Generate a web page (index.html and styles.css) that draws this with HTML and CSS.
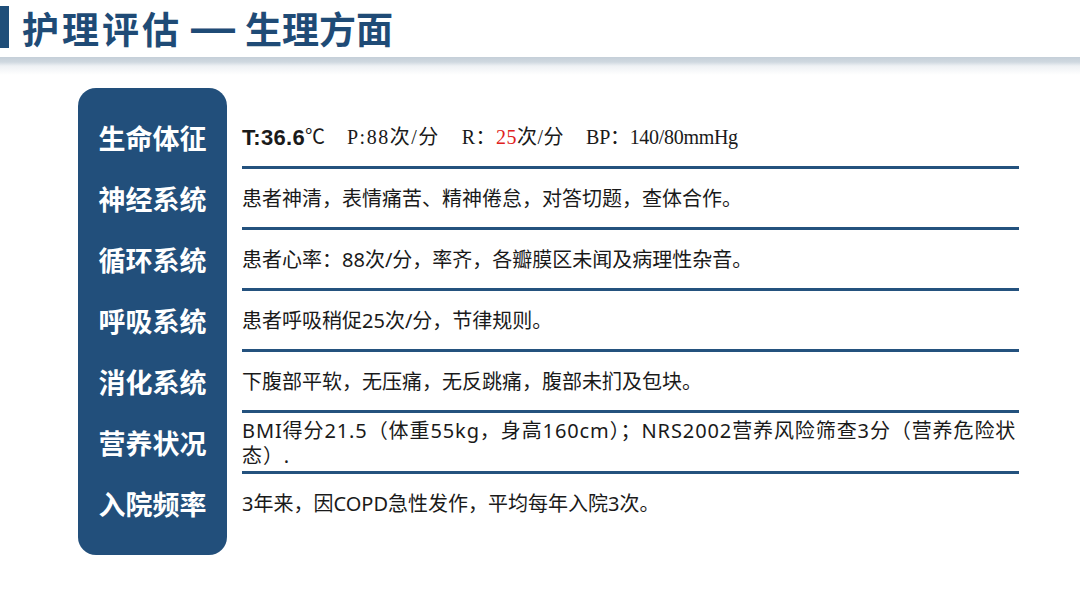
FILE: index.html
```html
<!DOCTYPE html>
<html lang="zh">
<head>
<meta charset="utf-8">
<link rel="stylesheet" href="styles.css">
</head>
<body>
<header class="header">
  <div class="accent"></div>
  <h1 class="title"><span class="t1">护理评估</span><span class="dash">—</span><span class="t2">生理方面</span></h1>
</header>
<div class="shadow"></div>
<main class="main">
  <div class="panel">
    <div class="label">生命体征</div>
    <div class="label">神经系统</div>
    <div class="label">循环系统</div>
    <div class="label">呼吸系统</div>
    <div class="label">消化系统</div>
    <div class="label">营养状况</div>
    <div class="label">入院频率</div>
  </div>
  <div class="rows">
    <div class="row vitals"><b class="temp">T:36.6</b><span>℃</span><span class="gap p">P:88次/分</span><span class="gap r">R：<span class="red">25</span>次/分</span><span class="gap bp">BP：140/80mmHg</span></div>
    <div class="row">患者神清，表情痛苦、精神倦怠，对答切题，查体合作。</div>
    <div class="row">患者心率：88次/分，率齐，各瓣膜区未闻及病理性杂音。</div>
    <div class="row">患者呼吸稍促25次/分，节律规则。</div>
    <div class="row">下腹部平软，无压痛，无反跳痛，腹部未扪及包块。</div>
    <div class="row"><p class="para">BMI得分21.5（体重55kg，身高160cm）；NRS2002营养风险筛查3分（营养危险状<br>态）.</p></div>
    <div class="row last">3年来，因COPD急性发作，平均每年入院3次。</div>
  </div>
</main>
</body>
</html>
```

FILE: styles.css
```css
* { box-sizing: border-box; }
html, body { margin: 0; padding: 0; background: #ffffff; }
body {
  width: 1080px;
  height: 600px;
  overflow: hidden;
  font-family: "Noto Sans CJK SC", "Noto Sans", sans-serif;
}
.header {
  height: 57px;
  display: flex;
  align-items: center;
  background: #ffffff;
}
.accent {
  width: 9px;
  height: 42px;
  background: #1f4e79;
  align-self: flex-start;
  margin-top: 6px;
}
.title {
  margin: 0 0 0 13px;
  font-size: 37px;
  font-weight: 700;
  color: #1f4b76;
  line-height: 1.2;
  display: flex;
  align-items: center;
}
.t1 { letter-spacing: 3px; }
.t2 { letter-spacing: 0; }
.dash {
  font-family: "Liberation Sans", sans-serif;
  font-size: 44px;
  line-height: 1.2;
  font-weight: 700;
  margin: 0 10px 0 9px;
}
.shadow {
  height: 18px;
  background: linear-gradient(to bottom, #c5cfd8 0px, #cfd8e0 5px, #eef1f4 9px, #ffffff 18px);
}
.main {
  display: flex;
  gap: 15px;
  padding-left: 78px;
  margin-top: 13px;
}
.panel {
  width: 149px;
  background: #224f7b;
  border-radius: 18px;
  padding: 20px 0;
  display: flex;
  flex-direction: column;
}
.label {
  height: 61px;
  display: flex;
  align-items: center;
  justify-content: center;
  color: #ffffff;
  font-size: 27px;
  font-weight: 700;
  padding-bottom: 3px;
}
.rows {
  width: 777px;
  padding-top: 20px;
  display: flex;
  flex-direction: column;
}
.row {
  height: 61px;
  border-bottom: 3px solid #24527e;
  display: flex;
  align-items: center;
  font-family: "Noto Sans", "Noto Sans CJK SC", sans-serif;
  font-size: 20px;
  line-height: 25px;
  color: #1a1a1a;
  white-space: nowrap;
}
.para { margin: 0; padding-top: 2px; letter-spacing: 0.9px; }
.row.last { border-bottom: none; padding-bottom: 3px; }
.vitals {
  font-family: "Liberation Serif", "Noto Sans CJK SC", serif;
  font-size: 20px;
}
.gap { margin-left: 22px; }
.p { letter-spacing: 1.5px; }
.r { letter-spacing: 0.5px; }
.bp { letter-spacing: -0.3px; }
.temp {
  font-family: "Liberation Sans", "Noto Sans", sans-serif;
  font-size: 22px;
  font-weight: 700;
  letter-spacing: 0.3px;
}
.red { color: #e02020; }
```
